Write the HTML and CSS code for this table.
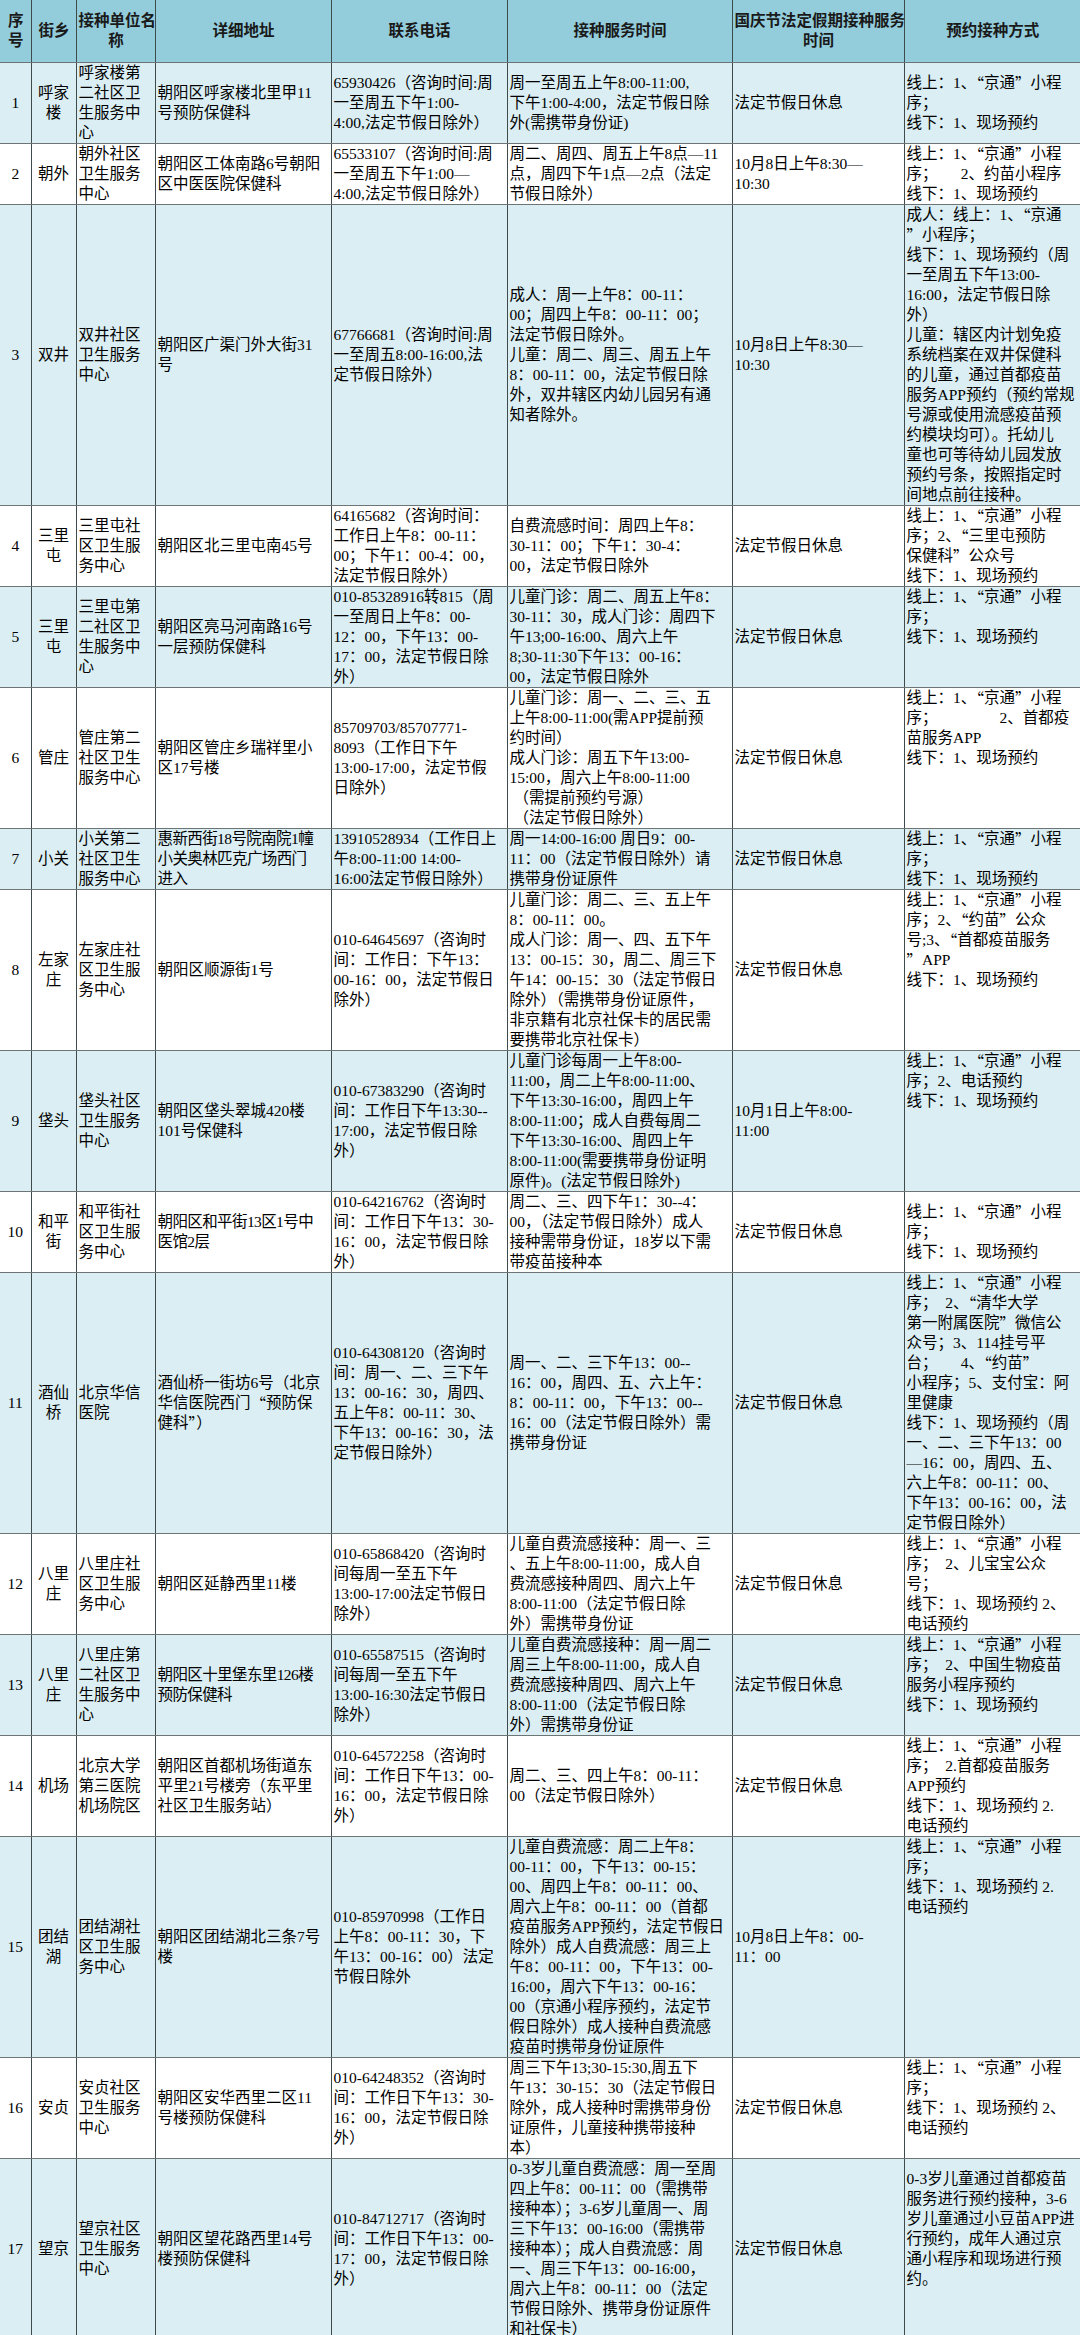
FILE: index.html
```html
<!DOCTYPE html>
<html lang="zh-CN">
<head>
<meta charset="utf-8">
<title>朝阳区流感疫苗接种门诊</title>
<link rel="stylesheet" href="styles.css">
</head>
<body>
<table class="sheet">
<colgroup>
<col class="w-no"><col class="w-street"><col class="w-unit"><col class="w-addr"><col class="w-tel"><col class="w-time"><col class="w-holiday"><col class="w-book">
</colgroup>
<thead>
<tr>
<th>序<br>号</th><th>街乡</th><th>接种单位名<br>称</th><th>详细地址</th><th>联系电话</th><th>接种服务时间</th><th>国庆节法定假期接种服务<br>时间</th><th>预约接种方式</th>
</tr>
</thead>
<tbody>
<tr class="alt">
<td class="ctr">1</td><td class="ctr">呼家<br>楼</td><td>呼家楼第<br>二社区卫<br>生服务中<br>心</td><td>朝阳区呼家楼北里甲11<br>号预防保健科</td><td>65930426（咨询时间:周<br>一至周五下午1:00-<br>4:00,法定节假日除外）</td><td>周一至周五上午8:00-11:00,<br>下午1:00-4:00，法定节假日除<br>外(需携带身份证)</td><td>法定节假日休息</td><td>线上：1、<span class="cq">“</span>京通<span class="cq">”</span>小程<br>序；<br>线下：1、现场预约</td>
</tr>
<tr>
<td class="ctr">2</td><td class="ctr">朝外</td><td>朝外社区<br>卫生服务<br>中心</td><td>朝阳区工体南路6号朝阳<br>区中医医院保健科</td><td>65533107（咨询时间:周<br>一至周五下午1:00—<br>4:00,法定节假日除外）</td><td>周二、周四、周五上午8点—11<br>点，周四下午1点—2点（法定<br>节假日除外）</td><td>10月8日上午8:30—<br>10:30</td><td>线上：1、<span class="cq">“</span>京通<span class="cq">”</span>小程<br>序；&emsp;&ensp;2、约苗小程序<br>线下：1、现场预约</td>
</tr>
<tr class="alt">
<td class="ctr">3</td><td class="ctr">双井</td><td>双井社区<br>卫生服务<br>中心</td><td>朝阳区广渠门外大街31<br>号</td><td>67766681（咨询时间:周<br>一至周五8:00-16:00,法<br>定节假日除外）</td><td>成人：周一上午8：00-11：<br>00；周四上午8：00-11：00；<br>法定节假日除外。<br>儿童：周二、周三、周五上午<br>8：00-11：00，法定节假日除<br>外，双井辖区内幼儿园另有通<br>知者除外。</td><td>10月8日上午8:30—<br>10:30</td><td>成人：线上：1、<span class="cq">“</span>京通<br><span class="cq">”</span>小程序；<br>线下：1、现场预约（周<br>一至周五下午13:00-<br>16:00，法定节假日除<br>外）<br>儿童：辖区内计划免疫<br>系统档案在双井保健科<br>的儿童，通过首都疫苗<br>服务APP预约（预约常规<br>号源或使用流感疫苗预<br>约模块均可）。托幼儿<br>童也可等待幼儿园发放<br>预约号条，按照指定时<br>间地点前往接种。</td>
</tr>
<tr>
<td class="ctr">4</td><td class="ctr">三里<br>屯</td><td>三里屯社<br>区卫生服<br>务中心</td><td>朝阳区北三里屯南45号</td><td>64165682（咨询时间：<br>工作日上午8：00-11：<br>00；下午1：00-4：00，<br>法定节假日除外）</td><td>自费流感时间：周四上午8：<br>30-11：00；下午1：30-4：<br>00，法定节假日除外</td><td>法定节假日休息</td><td>线上：1、<span class="cq">“</span>京通<span class="cq">”</span>小程<br>序；2、<span class="cq">“</span>三里屯预防<br>保健科<span class="cq">”</span>公众号<br>线下：1、现场预约</td>
</tr>
<tr class="alt">
<td class="ctr">5</td><td class="ctr">三里<br>屯</td><td>三里屯第<br>二社区卫<br>生服务中<br>心</td><td>朝阳区亮马河南路16号<br>一层预防保健科</td><td>010-85328916转815（周<br>一至周日上午8：00-<br>12：00，下午13：00-<br>17：00，法定节假日除<br>外）</td><td>儿童门诊：周二、周五上午8：<br>30-11：30，成人门诊：周四下<br>午13;00-16:00、周六上午<br>8;30-11:30下午13：00-16：<br>00，法定节假日除外</td><td>法定节假日休息</td><td class="top">线上：1、<span class="cq">“</span>京通<span class="cq">”</span>小程<br>序；<br>线下：1、现场预约</td>
</tr>
<tr>
<td class="ctr">6</td><td class="ctr">管庄</td><td>管庄第二<br>社区卫生<br>服务中心</td><td>朝阳区管庄乡瑞祥里小<br>区17号楼</td><td>85709703/85707771-<br>8093（工作日下午<br>13:00-17:00，法定节假<br>日除外）</td><td>儿童门诊：周一、二、三、五<br>上午8:00-11:00(需APP提前预<br>约时间）<br>成人门诊：周五下午13:00-<br>15:00，周六上午8:00-11:00<br>&nbsp;（需提前预约号源）<br>&nbsp;（法定节假日除外）</td><td>法定节假日休息</td><td class="top">线上：1、<span class="cq">“</span>京通<span class="cq">”</span>小程<br>序；&emsp;&emsp;&emsp;&emsp;2、首都疫<br>苗服务APP<br>线下：1、现场预约</td>
</tr>
<tr class="alt">
<td class="ctr">7</td><td class="ctr">小关</td><td>小关第二<br>社区卫生<br>服务中心</td><td class="tight">惠新西街18号院南院1幢<br>小关奥林匹克广场西门<br>进入</td><td>13910528934（工作日上<br>午8:00-11:00 14:00-<br>16:00法定节假日除外）</td><td>周一14:00-16:00 周日9：00-<br>11：00（法定节假日除外）请<br>携带身份证原件</td><td>法定节假日休息</td><td>线上：1、<span class="cq">“</span>京通<span class="cq">”</span>小程<br>序；<br>线下：1、现场预约</td>
</tr>
<tr>
<td class="ctr">8</td><td class="ctr">左家<br>庄</td><td>左家庄社<br>区卫生服<br>务中心</td><td>朝阳区顺源街1号</td><td>010-64645697（咨询时<br>间：工作日：下午13：<br>00-16：00，法定节假日<br>除外）</td><td>儿童门诊：周二、三、五上午<br>8：00-11：00。<br>成人门诊：周一、四、五下午<br>13：00-15：30，周二、周三下<br>午14：00-15：30（法定节假日<br>除外）（需携带身份证原件，<br>非京籍有北京社保卡的居民需<br>要携带北京社保卡）</td><td>法定节假日休息</td><td class="top">线上：1、<span class="cq">“</span>京通<span class="cq">”</span>小程<br>序；2、<span class="cq">“</span>约苗<span class="cq">”</span>公众<br>号;3、<span class="cq">“</span>首都疫苗服务<br><span class="cq">”</span>APP<br>线下：1、现场预约</td>
</tr>
<tr class="alt">
<td class="ctr">9</td><td class="ctr">垡头</td><td>垡头社区<br>卫生服务<br>中心</td><td>朝阳区垡头翠城420楼<br>101号保健科</td><td>010-67383290（咨询时<br>间：工作日下午13:30--<br>17:00，法定节假日除<br>外）</td><td>儿童门诊每周一上午8:00-<br>11:00，周二上午8:00-11:00、<br>下午13:30-16:00，周四上午<br>8:00-11:00；成人自费每周二<br>下午13:30-16:00、周四上午<br>8:00-11:00(需要携带身份证明<br>原件)。(法定节假日除外)</td><td>10月1日上午8:00-<br>11:00</td><td class="top">线上：1、<span class="cq">“</span>京通<span class="cq">”</span>小程<br>序；2、电话预约<br>线下：1、现场预约</td>
</tr>
<tr>
<td class="ctr">10</td><td class="ctr">和平<br>街</td><td>和平街社<br>区卫生服<br>务中心</td><td class="tight">朝阳区和平街13区1号中<br>医馆2层</td><td>010-64216762（咨询时<br>间：工作日下午13：30-<br>16：00，法定节假日除<br>外）</td><td>周二、三、四下午1：30--4：<br>00，（法定节假日除外）成人<br>接种需带身份证，18岁以下需<br>带疫苗接种本</td><td>法定节假日休息</td><td>线上：1、<span class="cq">“</span>京通<span class="cq">”</span>小程<br>序；<br>线下：1、现场预约</td>
</tr>
<tr class="alt">
<td class="ctr">11</td><td class="ctr">酒仙<br>桥</td><td>北京华信<br>医院</td><td>酒仙桥一街坊6号（北京<br>华信医院西门<span class="cq">“</span>预防保<br>健科<span class="cq">”</span>）</td><td>010-64308120（咨询时<br>间：周一、二、三下午<br>13：00-16：30，周四、<br>五上午8：00-11：30、<br>下午13：00-16：30，法<br>定节假日除外）</td><td>周一、二、三下午13：00--<br>16：00，周四、五、六上午：<br>8：00-11：00，下午13：00--<br>16：00（法定节假日除外）需<br>携带身份证</td><td>法定节假日休息</td><td>线上：1、<span class="cq">“</span>京通<span class="cq">”</span>小程<br>序；&ensp;2、<span class="cq">“</span>清华大学<br>第一附属医院<span class="cq">”</span>微信公<br>众号；3、114挂号平<br>台；&emsp;&ensp;4、<span class="cq">“</span>约苗<span class="cq">”</span><br>小程序；5、支付宝：阿<br>里健康<br>线下：1、现场预约（周<br>一、二、三下午13：00<br>—16：00，周四、五、<br>六上午8：00-11：00、<br>下午13：00-16：00，法<br>定节假日除外）</td>
</tr>
<tr>
<td class="ctr">12</td><td class="ctr">八里<br>庄</td><td>八里庄社<br>区卫生服<br>务中心</td><td>朝阳区延静西里11楼</td><td>010-65868420（咨询时<br>间每周一至五下午<br>13:00-17:00法定节假日<br>除外）</td><td>儿童自费流感接种：周一、三<br>、五上午8:00-11:00，成人自<br>费流感接种周四、周六上午<br>8:00-11:00（法定节假日除<br>外）需携带身份证</td><td>法定节假日休息</td><td>线上：1、<span class="cq">“</span>京通<span class="cq">”</span>小程<br>序；&ensp;2、儿宝宝公众<br>号；<br>线下：1、现场预约 2、<br>电话预约</td>
</tr>
<tr class="alt">
<td class="ctr">13</td><td class="ctr">八里<br>庄</td><td>八里庄第<br>二社区卫<br>生服务中<br>心</td><td class="tight">朝阳区十里堡东里126楼<br>预防保健科</td><td>010-65587515（咨询时<br>间每周一至五下午<br>13:00-16:30法定节假日<br>除外）</td><td>儿童自费流感接种：周一周二<br>周三上午8:00-11:00，成人自<br>费流感接种周四、周六上午<br>8:00-11:00（法定节假日除<br>外）需携带身份证</td><td>法定节假日休息</td><td class="top">线上：1、<span class="cq">“</span>京通<span class="cq">”</span>小程<br>序；&ensp;2、中国生物疫苗<br>服务小程序预约<br>线下：1、现场预约</td>
</tr>
<tr>
<td class="ctr">14</td><td class="ctr">机场</td><td>北京大学<br>第三医院<br>机场院区</td><td>朝阳区首都机场街道东<br>平里21号楼旁（东平里<br>社区卫生服务站）</td><td>010-64572258（咨询时<br>间：工作日下午13：00-<br>16：00，法定节假日除<br>外）</td><td>周二、三、四上午8：00-11：<br>00（法定节假日除外）</td><td>法定节假日休息</td><td>线上：1、<span class="cq">“</span>京通<span class="cq">”</span>小程<br>序；&ensp;2.首都疫苗服务<br>APP预约<br>线下：1、现场预约 2.<br>电话预约</td>
</tr>
<tr class="alt">
<td class="ctr">15</td><td class="ctr">团结<br>湖</td><td>团结湖社<br>区卫生服<br>务中心</td><td>朝阳区团结湖北三条7号<br>楼</td><td>010-85970998（工作日<br>上午8：00-11：30，下<br>午13：00-16：00）法定<br>节假日除外</td><td>儿童自费流感：周二上午8：<br>00-11：00，下午13：00-15：<br>00、周四上午8：00-11：00、<br>周六上午8：00-11：00（首都<br>疫苗服务APP预约，法定节假日<br>除外）成人自费流感：周三上<br>午8：00-11：00，下午13：00-<br>16:00，周六下午13：00-16：<br>00（京通小程序预约，法定节<br>假日除外）成人接种自费流感<br>疫苗时携带身份证原件</td><td>10月8日上午8：00-<br>11：00</td><td class="top">线上：1、<span class="cq">“</span>京通<span class="cq">”</span>小程<br>序；<br>线下：1、现场预约 2.<br>电话预约</td>
</tr>
<tr>
<td class="ctr">16</td><td class="ctr">安贞</td><td>安贞社区<br>卫生服务<br>中心</td><td>朝阳区安华西里二区11<br>号楼预防保健科</td><td>010-64248352（咨询时<br>间：工作日下午13：30-<br>16：00，法定节假日除<br>外）</td><td>周三下午13;30-15:30,周五下<br>午13：30-15：30（法定节假日<br>除外，成人接种时需携带身份<br>证原件，儿童接种携带接种<br>本）</td><td>法定节假日休息</td><td class="top">线上：1、<span class="cq">“</span>京通<span class="cq">”</span>小程<br>序；<br>线下：1、现场预约 2、<br>电话预约</td>
</tr>
<tr class="alt">
<td class="ctr">17</td><td class="ctr">望京</td><td>望京社区<br>卫生服务<br>中心</td><td>朝阳区望花路西里14号<br>楼预防保健科</td><td>010-84712717（咨询时<br>间：工作日下午13：00-<br>17：00，法定节假日除<br>外）</td><td>0-3岁儿童自费流感：周一至周<br>四上午8：00-11：00（需携带<br>接种本）；3-6岁儿童周一、周<br>三下午13：00-16:00（需携带<br>接种本）；成人自费流感：周<br>一、周三下午13：00-16:00，<br>周六上午8：00-11：00（法定<br>节假日除外、携带身份证原件<br>和社保卡）</td><td>法定节假日休息</td><td class="top-pad">0-3岁儿童通过首都疫苗<br>服务进行预约接种，3-6<br>岁儿童通过小豆苗APP进<br>行预约，成年人通过京<br>通小程序和现场进行预<br>约。</td>
</tr>
</tbody>
</table>
</body>
</html>
```

FILE: styles.css
```css
html, body {
  margin: 0;
  padding: 0;
  background: #ffffff;
}

.sheet {
  border-collapse: collapse;
  border-style: hidden;
  table-layout: fixed;
  width: 1080px;
  font-family: "Liberation Serif", "Noto Sans CJK SC", serif;
  font-size: 15.5px;
  line-height: 20px;
  color: #000;
}

.w-no { width: 31px; }
.w-street { width: 45px; }
.w-unit { width: 79px; }
.w-addr { width: 176px; }
.w-tel { width: 176px; }
.w-time { width: 225px; }
.w-holiday { width: 172px; }
.w-book { width: 176px; }

.sheet th,
.sheet td {
  border-left: 1px solid #3f4a4d;
  border-right: 1px solid #3f4a4d;
  border-top: 1px solid #6d7476;
  border-bottom: 1px solid #6d7476;
  padding: 0 1px 0 2px;
  vertical-align: middle;
  text-align: left;
  white-space: nowrap;
  overflow: hidden;
}

.sheet th {
  background: #93cddc;
  font-weight: 700;
  text-align: center;
  height: 62px;
  color: #1a1a1a;
}

.sheet tr.alt td {
  background: #daeef3;
}

.sheet td.ctr {
  text-align: center;
  padding: 0;
}

.sheet td.top {
  vertical-align: top;
}

.sheet td.top-pad {
  vertical-align: top;
  padding-top: 10px;
}

.sheet td.tight {
  letter-spacing: -0.6px;
}

.cq {
  font-family: "Noto Sans CJK SC", sans-serif;
  vertical-align: top;
}
```
